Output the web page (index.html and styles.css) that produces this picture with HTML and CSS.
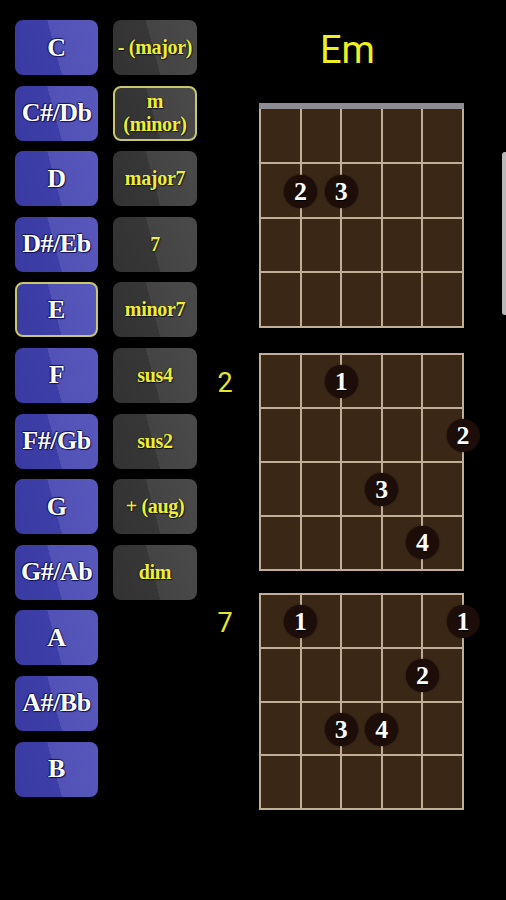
FILE: index.html
```html
<!DOCTYPE html>
<html>
<head>
<meta charset="utf-8">
<link rel="stylesheet" href="styles.css">
</head>
<body>
<div class="app">
  <div class="keys">
    <div class="btn key">C</div>
    <div class="btn key">C#/Db</div>
    <div class="btn key">D</div>
    <div class="btn key">D#/Eb</div>
    <div class="btn key selected">E</div>
    <div class="btn key">F</div>
    <div class="btn key">F#/Gb</div>
    <div class="btn key">G</div>
    <div class="btn key">G#/Ab</div>
    <div class="btn key">A</div>
    <div class="btn key">A#/Bb</div>
    <div class="btn key">B</div>
  </div>
  <div class="types">
    <div class="btn type">- (major)</div>
    <div class="btn type selected">m<br>(minor)</div>
    <div class="btn type">major7</div>
    <div class="btn type">7</div>
    <div class="btn type">minor7</div>
    <div class="btn type">sus4</div>
    <div class="btn type">sus2</div>
    <div class="btn type">+ (aug)</div>
    <div class="btn type">dim</div>
  </div>
  <div class="charts">
    <div class="title">Em</div>
    <div class="chart chart-1">
      <div class="fret-no"></div>
      <div class="board-wrap">
        <div class="nut"></div>
        <div class="board">
          <div class="cell"></div><div class="cell"></div><div class="cell"></div><div class="cell"></div><div class="cell"></div>
          <div class="cell"></div><div class="cell"></div><div class="cell"></div><div class="cell"></div><div class="cell"></div>
          <div class="cell"></div><div class="cell"></div><div class="cell"></div><div class="cell"></div><div class="cell"></div>
          <div class="cell"></div><div class="cell"></div><div class="cell"></div><div class="cell"></div><div class="cell"></div>
          <div class="dot s2 f2">2</div>
          <div class="dot s3 f2">3</div>
        </div>
      </div>
    </div>
    <div class="chart chart-2">
      <div class="fret-no">2</div>
      <div class="board-wrap">
        <div class="board">
          <div class="cell"></div><div class="cell"></div><div class="cell"></div><div class="cell"></div><div class="cell"></div>
          <div class="cell"></div><div class="cell"></div><div class="cell"></div><div class="cell"></div><div class="cell"></div>
          <div class="cell"></div><div class="cell"></div><div class="cell"></div><div class="cell"></div><div class="cell"></div>
          <div class="cell"></div><div class="cell"></div><div class="cell"></div><div class="cell"></div><div class="cell"></div>
          <div class="dot s3 f1">1</div>
          <div class="dot s6 f2">2</div>
          <div class="dot s4 f3">3</div>
          <div class="dot s5 f4">4</div>
        </div>
      </div>
    </div>
    <div class="chart chart-3">
      <div class="fret-no">7</div>
      <div class="board-wrap">
        <div class="board">
          <div class="cell"></div><div class="cell"></div><div class="cell"></div><div class="cell"></div><div class="cell"></div>
          <div class="cell"></div><div class="cell"></div><div class="cell"></div><div class="cell"></div><div class="cell"></div>
          <div class="cell"></div><div class="cell"></div><div class="cell"></div><div class="cell"></div><div class="cell"></div>
          <div class="cell"></div><div class="cell"></div><div class="cell"></div><div class="cell"></div><div class="cell"></div>
          <div class="dot s2 f1">1</div>
          <div class="dot s6 f1">1</div>
          <div class="dot s5 f2">2</div>
          <div class="dot s3 f3">3</div>
          <div class="dot s4 f3">4</div>
        </div>
      </div>
    </div>
  </div>
</div>
<div class="scrollbar"></div>
</body>
</html>
```
FILE: styles.css
```css
html, body {
  margin: 0;
  padding: 0;
  background: #000;
}
body {
  width: 506px;
  height: 900px;
  overflow: hidden;
  position: relative;
}
.app {
  display: flex;
  padding: 20px 0 0 15px;
}
.keys, .types {
  display: flex;
  flex-direction: column;
  gap: 10.6px;
}
.keys { width: 83px; }
.types { width: 84px; margin-left: 15px; }
.btn {
  height: 55px;
  box-sizing: border-box;
  border-radius: 8px;
  display: flex;
  align-items: center;
  justify-content: center;
  text-align: center;
  font-family: "Liberation Serif", "Times New Roman", serif;
  font-weight: bold;
}
.key {
  background: linear-gradient(75deg, #3a3aa2 0%, #3e3ea8 48%, #5252b6 48%, #5858bc 100%);
  color: #fff;
  font-size: 26px;
  letter-spacing: -0.5px;
  text-shadow: 1px 1px 1px #0e0e58, -1px 0 1px #0e0e58, 0 -1px 1px #12125e;
}
.type {
  background: linear-gradient(75deg, #323232 0%, #373737 48%, #444444 48%, #4a4a4a 100%);
  color: #eeee36;
  font-size: 20px;
  line-height: 23px;
  letter-spacing: -0.3px;
  text-shadow: 1px 1px 1px #111, -1px 0 1px #222;
}
.btn.selected {
  border: 2px solid #c9c76c;
}
.charts {
  flex: 1;
  display: flex;
  flex-direction: column;
}
.title {
  margin-top: 11px;
  padding-left: 123px;
  height: 38px;
  line-height: 38px;
  font-family: Roboto, "Liberation Sans", sans-serif;
  font-size: 38px;
  color: #eef022;
}
.chart {
  display: flex;
  align-items: flex-start;
}
.chart-1 { margin-top: 34px; }
.chart-2 { margin-top: 25px; }
.chart-3 { margin-top: 22px; }
.fret-no {
  width: 62px;
  padding-right: 6px;
  box-sizing: border-box;
  text-align: center;
  font-family: Roboto, "Liberation Sans", sans-serif;
  font-size: 27px;
  color: #e6e630;
  margin-top: 14px;
  line-height: 32px;
}
.board-wrap {
  width: 205px;
}
.nut {
  height: 6px;
  background: #8c8c92;
}
.board {
  position: relative;
  height: 218px;
  box-sizing: border-box;
  padding: 2px;
  display: grid;
  grid-template-columns: repeat(5, 1fr);
  grid-template-rows: repeat(4, 1fr);
  gap: 2px;
  background: #c2ae96;
}
.chart-1 .board { padding-top: 0; height: 219px; }
.chart-3 .board { height: 217px; }
.cell {
  background: #3a2716;
}
.dot {
  position: absolute;
  width: 33px;
  height: 33px;
  border-radius: 50%;
  background: #1d0d09;
  box-shadow: 0 0 2px rgba(0,0,0,0.7);
  color: #fff;
  font-family: "Liberation Serif", "Times New Roman", serif;
  font-weight: bold;
  font-size: 26px;
  line-height: 33px;
  text-align: center;
  text-shadow: 1px 1px 1px #000;
}
.s1 { left: -15.5px; }
.s2 { left: 25.1px; }
.s3 { left: 65.7px; }
.s4 { left: 106.3px; }
.s5 { left: 146.9px; }
.s6 { left: 187.5px; }
.f1 { top: 12px; }
.f2 { top: 66px; }
.f3 { top: 120px; }
.f4 { top: 173px; }
.scrollbar {
  position: absolute;
  right: -2px;
  top: 152px;
  width: 6px;
  height: 163px;
  border-radius: 4px;
  background: #b8b8b8;
}
```
